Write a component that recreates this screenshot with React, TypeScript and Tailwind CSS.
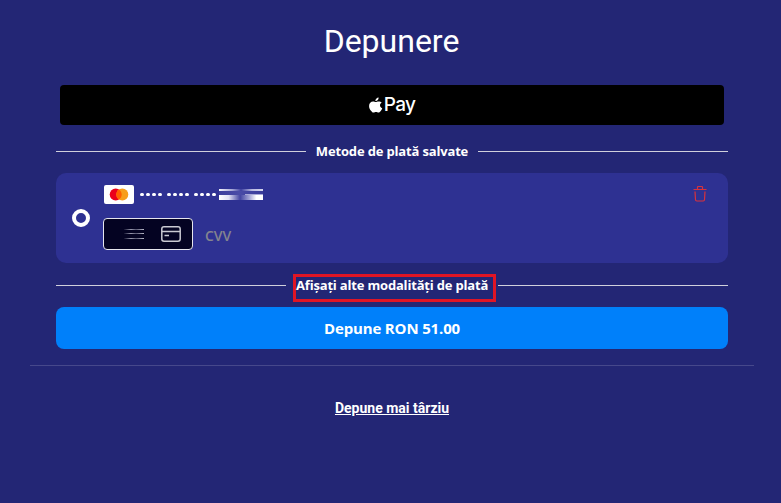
import React from 'react';

const AppleLogo: React.FC = () => (
  <svg width="15" height="17" viewBox="0 0 14 17" preserveAspectRatio="none" fill="white">
    <path d="M9.900 .6c.1 1-.3 1.800-.8 2.400-.6.700-1.400 1.100-2.200 1-.1-.9.300-1.700.8-2.300C8.300 1.100 9.200.650 9.900.600z" />
    <path d="M12.900 5.500c-1.100.700-1.700 1.600-1.700 2.800 0 1.400.8 2.500 2.100 3-.3 1-.8 1.900-1.400 2.700-.6.800-1.200 1.600-2.100 1.600s-1.200-.5-2.300-.5-1.500.5-2.300.5c-.9 0-1.600-.9-2.200-1.700C1.800 12.500 1 10.800 1 8.900c0-2.900 1.800-4.500 3.700-4.500 1 0 1.900.7 2.500.7.600 0 1.600-.7 2.800-.7 1.100 0 2.200.4 2.900 1.100z" />
  </svg>
);

const MastercardLogo: React.FC = () => (
  <svg width="30" height="19" viewBox="0 0 30 19">
    <rect width="30" height="19" rx="2" fill="white" />
    <circle cx="11.700" cy="9.500" r="6" fill="#eb001b" />
    <circle cx="18.300" cy="9.500" r="6" fill="#f79e1b" />
    <path d="M15 4.490a6 6 0 0 1 0 10.020a6 6 0 0 1 0-10.020z" fill="#ff5f00" />
  </svg>
);

const TrashIcon: React.FC = () => (
  <svg width="14" height="17" viewBox="0 0 14 17" fill="none" stroke="#d8323c" strokeWidth="1.2">
    <path d="M.5 4.500h13M4.500 4.300V2.200a.7.700 0 0 1 .7-.7h3.600a.7.700 0 0 1 .7.700v2.100" />
    <path d="M2 6.500l.5 8.300a1.300 1.300 0 0 0 1.300 1.200h6.400a1.300 1.300 0 0 0 1.300-1.200l.5-8.300" />
  </svg>
);

const CardIcon: React.FC = () => (
  <svg width="20" height="16" viewBox="0 0 20 16" fill="none" stroke="#c9c9d2" strokeWidth="1.500">
    <rect x=".8" y=".8" width="18.400" height="14.400" rx="2.200" />
    <path d="M1 5.500h18M3.500 9.400h4.500" />
  </svg>
);

// masked card number: three groups of four dots and a smudged last group
const CardNumber: React.FC = () => (
  <div className="ml-[6px] flex items-center">
    {[0, 1, 2].map((group) => (
      <div key={group} className="mr-[5px] flex gap-[2px]">
        {[0, 1, 2, 3].map((dot) => (
          <span key={dot} className="h-[3px] w-[4px] rounded-full bg-white" />
        ))}
      </div>
    ))}
    <svg className="-ml-[2px]" width="44" height="11" viewBox="0 0 44 11">
      <defs>
        <linearGradient id="top">
          <stop offset="0" stopColor="#f4f4fb" />
          <stop offset=".3" stopColor="#a5a6d5" />
          <stop offset=".5" stopColor="#3e40a0" />
          <stop offset=".75" stopColor="#b9bae0" />
          <stop offset="1" stopColor="#d5d5ef" />
        </linearGradient>
        <linearGradient id="middle">
          <stop offset="0" stopColor="#3d3f9d" />
          <stop offset=".45" stopColor="#4a4ca7" />
          <stop offset="1" stopColor="#3a3c9a" />
        </linearGradient>
        <linearGradient id="bottom">
          <stop offset="0" stopColor="#ffffff" />
          <stop offset=".22" stopColor="#e2e2f4" />
          <stop offset=".48" stopColor="#4244a2" />
          <stop offset=".7" stopColor="#a9aad8" />
          <stop offset=".85" stopColor="#ffffff" />
        </linearGradient>
      </defs>
      <rect width="44" height="11" fill="url(#middle)" />
      <rect width="44" height="2" fill="url(#top)" />
      <rect x="26" y="5" width="18" height="1" fill="#a9aad8" />
      <rect y="6" width="44" height="5" fill="url(#bottom)" />
    </svg>
  </div>
);

const CvvDigits: React.FC = () => (
  <svg width="20" height="12" viewBox="0 0 20 12">
    <defs>
      <linearGradient id="digits">
        <stop offset="0" stopColor="#9a9aae" stopOpacity=".1" />
        <stop offset=".35" stopColor="#9a9aae" />
        <stop offset=".6" stopColor="#555570" />
        <stop offset="1" stopColor="#b9b9c8" />
      </linearGradient>
    </defs>
    <rect y="1" width="20" height="1" fill="url(#digits)" />
    <rect y="5" width="20" height="1" fill="url(#digits)" />
    <rect y="10" width="20" height="1" fill="url(#digits)" />
  </svg>
);

const App: React.FC = () => {
  return (
    <div className="h-[503px] w-[781px] overflow-hidden bg-[#232675] pr-[27px] pl-[30px] font-['Open_Sans',sans-serif] text-white">
      <h1 className="pt-[21px] pr-px text-center font-[Roboto,sans-serif] text-[32px] leading-10">Depunere</h1>

      <main className="mt-6 px-[26px]">
        <button className="mx-1 flex h-10 w-[664px] items-center justify-center rounded bg-black pr-px">
          <AppleLogo />
          <span className="ml-px font-[Inter,sans-serif] text-[19px] leading-5 font-medium tracking-[-0.6px]">Pay</span>
        </button>

        {/* Saved methods */}
        <div className="flex h-12 items-center pt-[5px]">
          <span className="h-px flex-1 bg-[#d0d0dc]" />
          <h2 className="w-[172px] text-center text-[13px] font-bold tracking-[-0.16px] whitespace-nowrap">Metode de plată salvate</h2>
          <span className="h-px flex-1 bg-[#d0d0dc]" />
        </div>

        <div className="flex h-[90px] rounded-[10px] bg-[#2e3192] pl-4">
          <span className="mt-9 h-[18px] w-[18px] rounded-full border-4 border-white" />
          <div className="ml-[13px] flex-1 pt-3">
            <div className="flex h-[19px] items-center pl-px">
              <MastercardLogo />
              <CardNumber />
            </div>
            <div className="mt-[14px] flex items-center">
              <div className="flex h-8 w-[90px] items-center justify-between rounded border border-[#e6e6ee] bg-[#040322] pr-[11px] pl-5">
                <CvvDigits />
                <CardIcon />
              </div>
              <span className="mt-1 ml-3 text-sm font-semibold text-[#84848f]">CVV</span>
            </div>
          </div>
          <div className="mt-3 mr-[21px]">
            <TrashIcon />
          </div>
        </div>

        {/* Other methods */}
        <div className="flex h-11 items-center">
          <span className="h-px w-[230px] bg-[#d0d0dc]" />
          <div className="mt-[6px] ml-[7px] h-7 w-[203px] border-[3px] border-[#e01525] text-[13px] leading-[16px] font-bold tracking-[-0.18px] whitespace-nowrap">
            Afișați alte modalități de plată
          </div>
          <span className="ml-[2px] h-px w-[230px] bg-[#d0d0dc]" />
        </div>

        <button className="h-[42px] w-full rounded-lg bg-[#0080fa] text-[15px] font-bold tracking-[-0.15px]">Depune RON 51.00</button>
      </main>

      <div className="mt-4 border-t border-[#46488b] pt-[29px] text-center">
        <a className="font-[Roboto,sans-serif] text-sm leading-5 font-bold underline">Depune mai târziu</a>
      </div>
    </div>
  );
};

export default App;
